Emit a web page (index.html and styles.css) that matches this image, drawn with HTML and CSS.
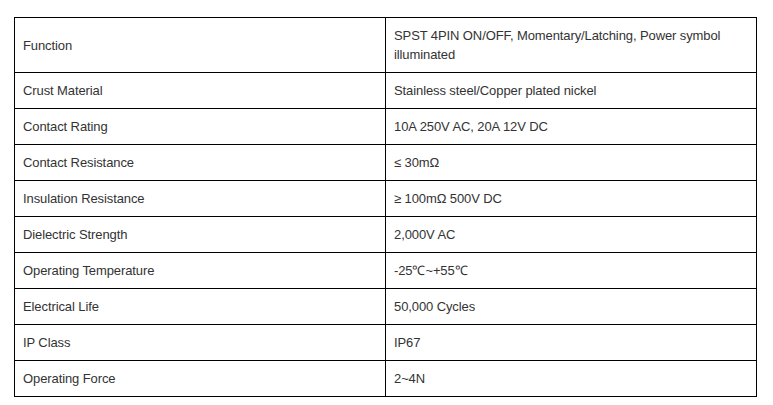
FILE: index.html
```html
<!DOCTYPE html>
<html lang="en">
<head>
<meta charset="utf-8">
<title>Specifications</title>
<link rel="stylesheet" href="styles.css">
</head>
<body>
<div class="wrap">
<table class="spec">
<colgroup><col class="c1"><col class="c2"></colgroup>
<tbody>
<tr><td>Function</td><td>SPST 4PIN ON/OFF, Momentary/Latching, Power symbol illuminated</td></tr>
<tr><td>Crust Material</td><td>Stainless steel/Copper plated nickel</td></tr>
<tr><td>Contact Rating</td><td>10A 250V AC, 20A 12V DC</td></tr>
<tr><td>Contact Resistance</td><td>≤ 30mΩ</td></tr>
<tr><td>Insulation Resistance</td><td>≥ 100mΩ 500V DC</td></tr>
<tr><td>Dielectric Strength</td><td>2,000V AC</td></tr>
<tr><td>Operating Temperature</td><td>-25℃~+55℃</td></tr>
<tr><td>Electrical Life</td><td>50,000 Cycles</td></tr>
<tr><td>IP Class</td><td>IP67</td></tr>
<tr><td>Operating Force</td><td>2~4N</td></tr>
</tbody>
</table>
</div>
</body>
</html>
```

FILE: styles.css
```css
html, body {
  margin: 0;
  padding: 0;
  background: #fff;
}
.wrap {
  padding: 17px 0 0 14px;
}
.spec {
  border-collapse: collapse;
  width: 742px;
  table-layout: fixed;
  font-family: "Liberation Sans", Arial, sans-serif;
  font-size: 13px;
  line-height: 19px;
  letter-spacing: -0.1px;
  color: #333;
}
.c1 { width: 371px; }
.c2 { width: 371px; }
.spec td {
  border: 1px solid #000;
  padding: 8px 8px;
  vertical-align: middle;
  text-align: left;
}
```
